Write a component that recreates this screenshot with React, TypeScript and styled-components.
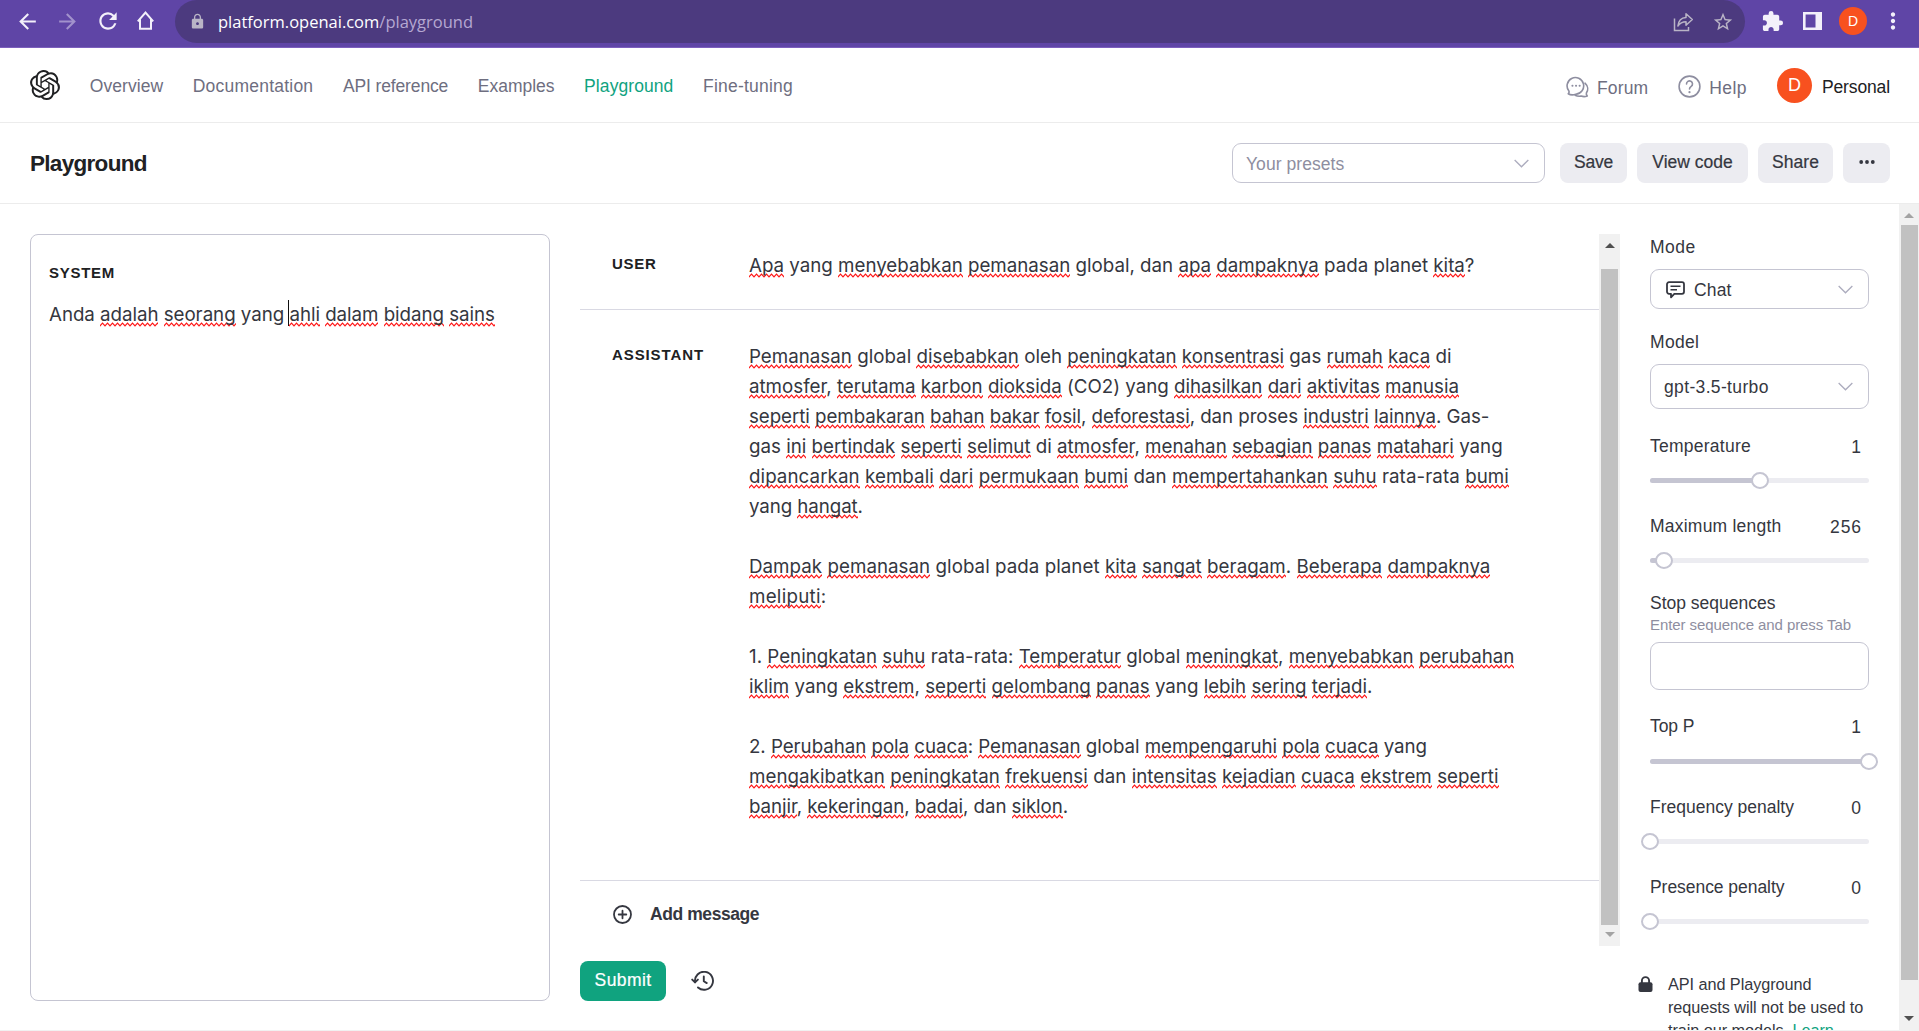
import React from 'react';
import styled, { createGlobalStyle } from 'styled-components';
import { MdArrowBack, MdArrowForward, MdRefresh, MdStarBorder, MdExtension, MdMoreVert, MdLock } from 'react-icons/md';

const UI_FONT = '"Liberation Sans", Arial, sans-serif';
const BODY_FONT = 'Inter, "Liberation Sans", sans-serif';
const GREEN = '#10a37f';
const INK = '#353740';
const BORDER = '#c5c5d2';

const SQUIGGLE =
  "url(\"data:image/svg+xml,%3Csvg xmlns='http://www.w3.org/2000/svg' width='5' height='5' viewBox='0 0 5 5'%3E%3Cpath d='M-.5 4.4L2.5 1L5.5 4.4' fill='none' stroke='%23ff1414' stroke-width='1.15'/%3E%3C/svg%3E\")";

const GlobalStyle = createGlobalStyle`
  *, *::before, *::after { box-sizing: border-box; }
  html, body { margin: 0; padding: 0; background: #fff; overflow: hidden; }
  body { font-family: ${UI_FONT}; font-size: 17.5px; line-height: 24px; color: ${INK}; }
  svg { display: block; flex: none; }
`;

const Window = styled.div`
  display: flex;
  flex-direction: column;
  height: 1031px;
  width: 1919px;
  overflow: hidden;
`;

/* ---------- browser bar ---------- */
const BrowserBar = styled.div`
  display: flex;
  align-items: flex-start;
  height: 48px;
  background: #5f45a6;
  border-bottom: 1px solid #7c5fbd;
  color: #f3f0fa;
`;
const BrowserNav = styled.div`
  display: flex;
  align-items: center;
  width: 175px;
  height: 42px;
  padding-left: 15px;
  gap: 15px;
`;
const Faded = styled.span`
  opacity: 0.45;
`;
const Omnibox = styled.div`
  display: flex;
  align-items: center;
  width: 1570px;
  height: 43px;
  padding: 0 11px 0 14px;
  border-radius: 21.5px;
  background: #4c3a7f;
  color: #b9b4c6;
`;
const Url = styled.span`
  flex: 1;
  margin-left: 12px;
  font: 400 16.5px/24px "Open Sans", "Noto Sans", sans-serif;
  color: #b5a8d2;
`;
const Host = styled.span`
  color: #fff;
`;
const OmniActions = styled.div`
  display: flex;
  align-items: center;
  gap: 18px;
`;
const BrowserActions = styled.div`
  display: flex;
  align-items: center;
  height: 42px;
  padding-left: 16px;
`;
const Avatar = styled.span<{ $size: number; $font: number }>`
  display: flex;
  align-items: center;
  justify-content: center;
  width: ${(p) => p.$size}px;
  height: ${(p) => p.$size}px;
  border-radius: 50%;
  background: #f8511f;
  color: #fff;
  font-size: ${(p) => p.$font}px;
`;
const BrowserAvatar = styled(Avatar)`
  margin: 0 12.5px 0 17px;
`;
const PanelIcon = styled.svg`
  margin-left: 19px;
`;

/* ---------- site header ---------- */
const SiteHeader = styled.header`
  display: flex;
  align-items: center;
  height: 75px;
  padding: 0 29px 0 30px;
  border-bottom: 1px solid #ececec;
`;
const Menu = styled.nav`
  display: flex;
  gap: 29.6px;
  flex: 1;
  margin: 2px 0 0 29.8px;
`;
const MenuLink = styled.a<{ $active?: boolean; $ls: number }>`
  color: ${(p) => (p.$active ? GREEN : '#6e6e80')};
  letter-spacing: ${(p) => p.$ls}px;
`;
const HeaderTools = styled.div`
  display: flex;
  align-items: center;
`;
const Tool = styled.a<{ $ls: number }>`
  display: flex;
  align-items: center;
  gap: 8px;
  margin: 3px 30px 0 0;
  color: #6e6e80;
  letter-spacing: ${(p) => p.$ls}px;
`;
const ToolLabel = styled.span`
  padding-top: 2px;
`;
const Account = styled.div`
  display: flex;
  align-items: center;
  gap: 10px;
  color: #202123;
`;
const AccountName = styled.span`
  padding-top: 3px;
  letter-spacing: -0.12px;
`;

/* ---------- page title bar ---------- */
const TitleBar = styled.div`
  display: flex;
  align-items: center;
  height: 81px;
  padding: 0 29px 0 30px;
  border-bottom: 1px solid #ececec;
`;
const Title = styled.h1`
  flex: 1;
  margin: 2px 0 0;
  font-size: 22.5px;
  line-height: 28px;
  font-weight: 700;
  letter-spacing: -0.7px;
  color: #202123;
`;
const Select = styled.div<{ $width: number; $height: number; $muted?: boolean }>`
  display: flex;
  align-items: center;
  justify-content: space-between;
  width: ${(p) => p.$width}px;
  height: ${(p) => p.$height}px;
  padding: 0 15px 0 13px;
  border: 1px solid ${BORDER};
  border-radius: 9px;
  color: ${(p) => (p.$muted ? '#8e8ea0' : INK)};
`;
const SelectLabel = styled.span<{ $ls: number }>`
  display: flex;
  align-items: center;
  gap: 8px;
  padding-top: 1px;
  letter-spacing: ${(p) => p.$ls}px;
`;
const ModeIcon = styled.svg`
  margin-left: 1px;
`;
const Actions = styled.div`
  display: flex;
  gap: 10px;
  margin-left: 15px;
`;
const Button = styled.button<{ $width: number; $primary?: boolean; $ls?: number }>`
  display: flex;
  align-items: center;
  justify-content: center;
  width: ${(p) => p.$width}px;
  height: 40px;
  padding: 0 0 2px;
  border: 0;
  border-radius: 8px;
  background: ${(p) => (p.$primary ? GREEN : '#ececf1')};
  color: ${(p) => (p.$primary ? '#fff' : INK)};
  font: 400 17.5px/24px ${UI_FONT};
  letter-spacing: ${(p) => p.$ls ?? 0}px;
  -webkit-text-stroke: 0.2px currentColor;
`;

/* ---------- workspace ---------- */
const Workspace = styled.main`
  display: flex;
  height: 826px;
`;
const SystemPanel = styled.section`
  width: 520px;
  height: 767px;
  margin: 30px 0 0 30px;
  padding: 26px 18px;
  border: 1px solid ${BORDER};
  border-radius: 8px;
`;
const RoleLabel = styled.div<{ $ls: number }>`
  font-size: 15px;
  line-height: 24px;
  font-weight: 700;
  letter-spacing: ${(p) => p.$ls}px;
  color: #202123;
`;
const Line = styled.div<{ $ls?: number }>`
  height: 30px;
  font: 400 18.75px/30px ${BODY_FONT};
  letter-spacing: ${(p) => p.$ls ?? 0}px;
  white-space: pre;
`;
const SystemLine = styled(Line)`
  margin-top: 15px;
`;
const Misspelt = styled.span`
  padding-bottom: 1px;
  background: ${SQUIGGLE} repeat-x 0 100% / 5px 5px;
`;
const Caret = styled.span`
  display: inline-block;
  width: 1px;
  height: 26px;
  margin: 0 0 0 -1px;
  vertical-align: -5px;
  background: #111;
`;
const Chat = styled.section`
  width: 1040px;
  margin: 30px 0 0 30px;
`;
const ChatScroll = styled.div`
  display: flex;
  height: 712px;
`;
const Messages = styled.div`
  width: 1019px;
`;
const Message = styled.div<{ $top: number; $height: number }>`
  display: flex;
  height: ${(p) => p.$height}px;
  padding: ${(p) => p.$top}px 0 0 32px;
  border-bottom: 1px solid #d9d9e3;
`;
const MessageRole = styled(RoleLabel)`
  width: 137px;
  padding-top: 1px;
`;
const AddMessage = styled.div`
  display: flex;
  align-items: center;
  gap: 18px;
  height: 66px;
  padding-left: 33px;
  font-weight: 700;
  letter-spacing: -0.42px;
`;
const Footer = styled.div`
  display: flex;
  align-items: center;
  gap: 25px;
  padding-top: 15px;
`;

/* ---------- scrollbars ---------- */
const ScrollTrack = styled.div<{ $width: number }>`
  display: flex;
  flex-direction: column;
  align-items: center;
  width: ${(p) => p.$width}px;
  height: 100%;
  background: #f1f1f1;
`;
const ScrollThumb = styled.div<{ $height: number; $gap: number }>`
  width: 17px;
  height: ${(p) => p.$height}px;
  margin-top: ${(p) => p.$gap}px;
  background: #c1c1c1;
`;
const ArrowUp = styled.i<{ $color: string }>`
  margin-top: 9px;
  border: 5px solid transparent;
  border-top: 0;
  border-bottom-color: ${(p) => p.$color};
`;
const ArrowDown = styled.i<{ $color: string }>`
  margin: auto 0 9px;
  border: 5px solid transparent;
  border-bottom: 0;
  border-top-color: ${(p) => p.$color};
`;

/* ---------- settings ---------- */
const Settings = styled.aside`
  display: flex;
  flex-direction: column;
  width: 279px;
  padding: 31px 30px 0;
  overflow: hidden;
`;
const Field = styled.div<{ $gap: number }>`
  margin-bottom: ${(p) => p.$gap}px;
`;
const FieldHead = styled.div<{ $ls: number; $gap: number }>`
  display: flex;
  justify-content: space-between;
  margin-bottom: ${(p) => p.$gap}px;
  letter-spacing: ${(p) => p.$ls}px;
`;
const FieldValue = styled.span`
  padding: 1px 7px 0 0;
  height: 24px;
  letter-spacing: 0.9px;
`;
const Hint = styled.div`
  height: 20px;
  margin-bottom: 7px;
  font-size: 15px;
  line-height: 20px;
  letter-spacing: -0.08px;
  color: #8e8ea0;
`;
const TextBox = styled.div`
  height: 48px;
  border: 1px solid ${BORDER};
  border-radius: 9px;
`;
const Track = styled.div`
  position: relative;
  height: 5px;
  border-radius: 3px;
  background: #ececf1;
`;
const Fill = styled.div`
  height: 5px;
  border-radius: 3px;
  background: ${BORDER};
`;
const Knob = styled.div`
  position: absolute;
  top: -6px;
  width: 18px;
  height: 17px;
  margin-left: -9px;
  border: 2px solid ${BORDER};
  border-radius: 50%;
  background: #fff;
`;
const Notice = styled.div`
  display: flex;
  gap: 15px;
  margin: 17px -10px 0 -12px;
  font-size: 16.25px;
  line-height: 23px;
  letter-spacing: -0.06px;
  white-space: pre;
`;
const NoticeIcon = styled.svg`
  margin-top: 3px;
`;
const NoticeText = styled.p`
  margin: 0;
`;
const NoticeLink = styled.a`
  color: ${GREEN};
`;
const BottomEdge = styled.div`
  height: 1px;
  background: #f1f1f1;
`;

/* ---------- text with spell-check marks ---------- */
const KNOWN = new Set(['anda', 'yang', 'global', 'dan', 'pada', 'planet', 'oleh', 'gas', 'di', 'co', 'proses', 'rata']);

function Checked({ text }: { text: string }) {
  return (
    <>
      {text.split(/([A-Za-z]+)/).map((part, i) =>
        /[A-Za-z]/.test(part) && !KNOWN.has(part.toLowerCase()) ? <Misspelt key={i}>{part}</Misspelt> : part,
      )}
    </>
  );
}

const ANSWER: { text: string; ls?: number }[] = [
  { text: 'Pemanasan global disebabkan oleh peningkatan konsentrasi gas rumah kaca di' },
  { text: 'atmosfer, terutama karbon dioksida (CO2) yang dihasilkan dari aktivitas manusia', ls: -0.02 },
  { text: 'seperti pembakaran bahan bakar fosil, deforestasi, dan proses industri lainnya. Gas-', ls: -0.07 },
  { text: 'gas ini bertindak seperti selimut di atmosfer, menahan sebagian panas matahari yang', ls: -0.01 },
  { text: 'dipancarkan kembali dari permukaan bumi dan mempertahankan suhu rata-rata bumi', ls: 0.06 },
  { text: 'yang hangat.', ls: -0.1 },
  { text: '' },
  { text: 'Dampak pemanasan global pada planet kita sangat beragam. Beberapa dampaknya', ls: 0.03 },
  { text: 'meliputi:', ls: 0.25 },
  { text: '' },
  { text: '1. Peningkatan suhu rata-rata: Temperatur global meningkat, menyebabkan perubahan' },
  { text: 'iklim yang ekstrem, seperti gelombang panas yang lebih sering terjadi.', ls: -0.02 },
  { text: '' },
  { text: '2. Perubahan pola cuaca: Pemanasan global mempengaruhi pola cuaca yang', ls: -0.06 },
  { text: 'mengakibatkan peningkatan frekuensi dan intensitas kejadian cuaca ekstrem seperti', ls: 0.03 },
  { text: 'banjir, kekeringan, badai, dan siklon.', ls: -0.08 },
];

const MENU = [
  { label: 'Overview', ls: 0.05 },
  { label: 'Documentation', ls: 0.22 },
  { label: 'API reference', ls: -0.13 },
  { label: 'Examples', ls: -0.02 },
  { label: 'Playground', ls: 0.08, active: true },
  { label: 'Fine-tuning', ls: 0.22 },
];

const Chevron = () => (
  <svg width="15" height="9" viewBox="0 0 16 9" fill="none" stroke="#acacbe" strokeWidth="1.4">
    <path d="M.7.7 8 8 15.3.7" />
  </svg>
);

type SliderProps = { label: string; value: string; percent: number; ls: number; gap: number; headGap?: number };

function Slider({ label, value, percent, ls, gap, headGap = 20 }: SliderProps) {
  return (
    <Field $gap={gap}>
      <FieldHead $ls={ls} $gap={headGap}>
        {label}
        <FieldValue>{value}</FieldValue>
      </FieldHead>
      <Track>
        <Fill style={{ width: `${percent}%` }} />
        <Knob style={{ left: `${percent}%` }} />
      </Track>
    </Field>
  );
}

export default function App() {
  return (
    <Window>
      <GlobalStyle />
      <BrowserBar>
        <BrowserNav>
          <MdArrowBack size={25} />
          <Faded><MdArrowForward size={25} /></Faded>
          <MdRefresh size={26} />
          <svg width="22" height="22" viewBox="0 0 22 22" fill="none" stroke="currentColor" strokeWidth="2">
            <path d="M1.800 11.300 9.500 2.600l7.700 8.700M4 9.400v9.400h11V9.400" />
          </svg>
        </BrowserNav>
        <Omnibox>
          <MdLock size={17} />
          <Url><Host>platform.openai.com</Host>/playground</Url>
          <OmniActions>
            <svg width="21" height="20" viewBox="0 0 21 20" fill="none" stroke="currentColor" strokeWidth="1.5">
              <path d="M1.5 6.5v12h14v-3.4" />
              <path d="M13 1.8v3.6C8.300 5.600 5.500 8.600 4.900 14c2-3 4.300-4.300 8.100-4.300v3.500L19.300 7.500z" strokeLinejoin="round" />
            </svg>
            <MdStarBorder size={22} />
          </OmniActions>
        </Omnibox>
        <BrowserActions>
          <MdExtension size={23} />
          <PanelIcon width="19" height="18" viewBox="0 0 19 18" fill="none" stroke="currentColor">
            <path d="M1.300 1.300h16.400v15.400H1.300z" strokeWidth="2.600" />
            <path d="M15.500 0v18" strokeWidth="6" />
          </PanelIcon>
          <BrowserAvatar $size={28} $font={14}>D</BrowserAvatar>
          <MdMoreVert size={26} />
        </BrowserActions>
      </BrowserBar>

      <SiteHeader>
        <svg width="30" height="30" viewBox="0 0 24 24" fill="#202123">
          <path d="M22.2819 9.8211a5.9847 5.9847 0 0 0-.5157-4.9108 6.0462 6.0462 0 0 0-6.5098-2.9A6.0651 6.0651 0 0 0 4.9807 4.1818a5.9847 5.9847 0 0 0-3.9977 2.9 6.0462 6.0462 0 0 0 .7427 7.0966 5.98 5.98 0 0 0 .511 4.9107 6.051 6.051 0 0 0 6.5146 2.9001A5.9847 5.9847 0 0 0 13.2599 24a6.0557 6.0557 0 0 0 5.7718-4.2058 5.9894 5.9894 0 0 0 3.9977-2.9001 6.0557 6.0557 0 0 0-.7475-7.0729zm-9.022 12.6081a4.4755 4.4755 0 0 1-2.8764-1.0408l.1419-.0804 4.7783-2.7582a.7948.7948 0 0 0 .3927-.6813v-6.7369l2.02 1.1686a.071.071 0 0 1 .038.052v5.5826a4.504 4.504 0 0 1-4.4945 4.4944zm-9.6607-4.1254a4.4708 4.4708 0 0 1-.5346-3.0137l.142.0852 4.783 2.7582a.7712.7712 0 0 0 .7806 0l5.8428-3.3685v2.3324a.0804.0804 0 0 1-.0332.0615L9.74 19.9502a4.4992 4.4992 0 0 1-6.1408-1.6464zM2.3408 7.8956a4.485 4.485 0 0 1 2.3655-1.9728V11.6a.7664.7664 0 0 0 .3879.6765l5.8144 3.3543-2.0201 1.1685a.0757.0757 0 0 1-.071 0l-4.8303-2.7865A4.504 4.504 0 0 1 2.3408 7.872zm16.5963 3.8558L13.1038 8.364 15.1192 7.2a.0757.0757 0 0 1 .071 0l4.8303 2.7913a4.4944 4.4944 0 0 1-.6765 8.1042v-5.6772a.79.79 0 0 0-.407-.667zm2.0107-3.0231l-.142-.0852-4.7735-2.7818a.7759.7759 0 0 0-.7854 0L9.409 9.2297V6.8974a.0662.0662 0 0 1 .0284-.0615l4.8303-2.7866a4.4992 4.4992 0 0 1 6.6802 4.66zM8.3065 12.863l-2.02-1.1638a.0804.0804 0 0 1-.038-.0567V6.0742a4.4992 4.4992 0 0 1 7.3757-3.4537l-.142.0805L8.704 5.459a.7948.7948 0 0 0-.3927.6813zm1.0976-2.3654l2.602-1.4998 2.6069 1.4998v2.9994l-2.5974 1.4997-2.6067-1.4997Z" />
        </svg>
        <Menu>
          {MENU.map((m) => (
            <MenuLink key={m.label} $active={m.active} $ls={m.ls}>{m.label}</MenuLink>
          ))}
        </Menu>
        <HeaderTools>
          <Tool $ls={0.15}>
            <svg width="23" height="22" viewBox="0 0 23 22" fill="none" stroke="#8e8ea0" strokeWidth="1.6" strokeLinecap="round" strokeLinejoin="round">
              <path d="M2.200 17.800c.9-.8 1.100-1.700.7-2.700A8.300 8.300 0 1 1 9.800 18.200c-2.200.8-5.200 1-7.600-.4z" />
              <path d="M19 7.200c3.200 3 3.400 7 1.400 9.800-.3 1 0 2 .9 3-2.200.8-4.300.7-6.200.1-2 .3-4.200.1-5.900-.9" />
              <path d="M6.400 9.800h.1M10 9.800h.1M13.600 9.800h.1" strokeWidth="2" />
            </svg>
            <ToolLabel>Forum</ToolLabel>
          </Tool>
          <Tool $ls={0.4}>
            <svg width="23" height="23" viewBox="0 0 23 23" fill="none" stroke="#8e8ea0" strokeWidth="1.6" strokeLinecap="round">
              <circle cx="11.500" cy="11.500" r="10.400" />
              <path d="M8.500 9a3 3 0 1 1 4.700 2.400c-1.100.8-1.700 1.300-1.700 2.500" />
              <path d="M11.500 17.100v.1" strokeWidth="2.200" />
            </svg>
            <ToolLabel>Help</ToolLabel>
          </Tool>
          <Account>
            <Avatar $size={35} $font={18}>D</Avatar>
            <AccountName>Personal</AccountName>
          </Account>
        </HeaderTools>
      </SiteHeader>

      <TitleBar>
        <Title>Playground</Title>
        <Select $width={313} $height={40} $muted>
          <SelectLabel $ls={0.05}>Your presets</SelectLabel>
          <Chevron />
        </Select>
        <Actions>
          <Button $width={67} $ls={-0.2}>Save</Button>
          <Button $width={111}>View code</Button>
          <Button $width={75} $ls={0.1}>Share</Button>
          <Button $width={47}>
            <svg width="16" height="4" viewBox="0 0 16 4" fill={INK}>
              <circle cx="2.200" cy="2" r="1.900" />
              <circle cx="8" cy="2" r="1.900" />
              <circle cx="13.800" cy="2" r="1.900" />
            </svg>
          </Button>
        </Actions>
      </TitleBar>

      <Workspace>
        <SystemPanel>
          <RoleLabel $ls={0.72}>SYSTEM</RoleLabel>
          <SystemLine $ls={-0.05}>
            <Checked text="Anda adalah seorang yang " />
            <Caret />
            <Checked text="ahli dalam bidang sains" />
          </SystemLine>
        </SystemPanel>

        <Chat>
          <ChatScroll>
            <Messages>
              <Message $top={17} $height={76}>
                <MessageRole $ls={0.7}>USER</MessageRole>
                <Line $ls={-0.02}><Checked text="Apa yang menyebabkan pemanasan global, dan apa dampaknya pada planet kita?" /></Line>
              </Message>
              <Message $top={32} $height={571}>
                <MessageRole $ls={0.9}>ASSISTANT</MessageRole>
                <div>
                  {ANSWER.map((line, i) => (
                    <Line key={i} $ls={line.ls}><Checked text={line.text} /></Line>
                  ))}
                </div>
              </Message>
              <AddMessage>
                <svg width="19" height="19" viewBox="0 0 19 19" fill="none" stroke={INK} strokeWidth="1.8" strokeLinecap="round">
                  <circle cx="9.500" cy="9.500" r="8.500" />
                  <path d="M9.500 5.700v7.600M5.700 9.500h7.600" />
                </svg>
                Add message
              </AddMessage>
            </Messages>
            <ScrollTrack $width={21}>
              <ArrowUp $color="#505050" />
              <ScrollThumb $height={656} $gap={21} />
              <ArrowDown $color="#a3a3a3" />
            </ScrollTrack>
          </ChatScroll>
          <Footer>
            <Button $width={86} $primary $ls={0.4}>Submit</Button>
            <svg width="23" height="20" viewBox="0 0 23 20" fill="none" stroke={INK} strokeWidth="1.900" strokeLinecap="round" strokeLinejoin="round">
              <path d="M4.100 11.200A9 9 0 1 1 7 16.500" />
              <path d="M1.200 8.600l2.800 2.800 2.900-2.800" />
              <path d="M12.800 5.400v4.800l3 1.900" />
            </svg>
          </Footer>
        </Chat>

        <Settings>
          <Field $gap={21}>
            <FieldHead $ls={0.5} $gap={10}>Mode</FieldHead>
            <Select $width={219} $height={40}>
              <SelectLabel $ls={0.13}>
                <ModeIcon width="21" height="18" viewBox="0 0 21 18" fill="none" stroke={INK} strokeWidth="1.800" strokeLinejoin="round">
                  <path d="M4 1.200h13a2 2 0 0 1 2 2v7.600a2 2 0 0 1-2 2H9.300L6 16.300v-3.500H4a2 2 0 0 1-2-2V3.200a2 2 0 0 1 2-2z" />
                  <path d="M5.500 5.200h10M5.500 8.700h6.500" strokeWidth="1.500" />
                </ModeIcon>
                Chat
              </SelectLabel>
              <Chevron />
            </Select>
          </Field>
          <Field $gap={25}>
            <FieldHead $ls={0.3} $gap={10}>Model</FieldHead>
            <Select $width={219} $height={45}>
              <SelectLabel $ls={0.35}>gpt-3.5-turbo</SelectLabel>
              <Chevron />
            </Select>
          </Field>
          <Slider label="Temperature" value="1" percent={50} ls={0.25} gap={31} />
          <Slider label="Maximum length" value="256" percent={6.25} ls={0.22} gap={28} />
          <Field $gap={24}>
            <FieldHead $ls={0} $gap={0}>Stop sequences</FieldHead>
            <Hint>Enter sequence and press Tab</Hint>
            <TextBox />
          </Field>
          <Slider label="Top P" value="1" percent={100} ls={-0.1} gap={31} headGap={21} />
          <Slider label="Frequency penalty" value="0" percent={0} ls={0} gap={31} />
          <Slider label="Presence penalty" value="0" percent={0} ls={-0.05} gap={32} />
          <Notice>
            <NoticeIcon width="15" height="16" viewBox="0 0 15 16">
              <path d="M3.900 7V4.700a3.600 3.600 0 0 1 7.200 0V7" fill="none" stroke={INK} strokeWidth="1.900" />
              <rect x="0.500" y="6.300" width="14" height="9.700" rx="2" fill={INK} />
            </NoticeIcon>
            <NoticeText>
              {'API and Playground\nrequests will not be used to\ntrain our models. '}
              <NoticeLink>Learn</NoticeLink>
            </NoticeText>
          </Notice>
        </Settings>

        <ScrollTrack $width={20}>
          <ArrowUp $color="#a3a3a3" />
          <ScrollThumb $height={755} $gap={7} />
          <ArrowDown $color="#505050" />
        </ScrollTrack>
      </Workspace>
      <BottomEdge />
    </Window>
  );
}
